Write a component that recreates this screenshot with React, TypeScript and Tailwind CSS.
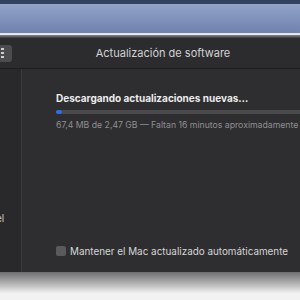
const font = { fontFamily: 'Inter, "Liberation Sans", sans-serif' };

export default function App() {
  return (
    <div className="w-[300px] h-[300px] overflow-hidden flex flex-col bg-[#f2f2f2]" style={font}>
      {/* desktop strip behind window */}
      <div className="h-[4px] bg-[#33425f]" />
      <div className="h-[29px] bg-gradient-to-b from-[#93a3c9] to-[#6f82ad]" />
      <div className="h-[2px] bg-[#e6e6e8]" />
      <div className="h-[3px] bg-gradient-to-b from-[#8a8a8c] to-[#3a3a3c]" />

      {/* window title bar */}
      <div className="h-[31px] bg-[#2c2c2e] border-b border-[#1c1c1e] flex items-center">
        <div className="w-[12px] h-[17px] bg-[#4c4c4e] rounded-r-[3px] flex flex-col justify-center gap-[2px] pl-[1px]">
          <span className="w-[3px] h-[2px] bg-[#cfcfcf]" />
          <span className="w-[3px] h-[2px] bg-[#cfcfcf]" />
          <span className="w-[3px] h-[2px] bg-[#cfcfcf]" />
        </div>
        <div className="flex-1 text-center text-[11px] text-[#d2d2d2] pl-[14px]">
          Actualización de software
        </div>
      </div>

      {/* window body */}
      <div className="h-[203px] flex bg-[#2e2e30]">
        <div className="w-[22px] border-r border-[#3c3c3e] bg-[#29292b] flex flex-col justify-end pb-[46px]">
          <span className="text-[10px] text-[#c8c8c8] -ml-[4px]">el</span>
        </div>
        <div className="flex-1 flex flex-col pl-[34px] pt-[23px] overflow-hidden">
          <div className="text-[10px] leading-[13px] font-bold text-[#ececec] whitespace-nowrap">
            Descargando actualizaciones nuevas…
          </div>
          <div className="mt-[5px] h-[4px] bg-[#4a4a4c] rounded-l-full w-[260px]">
            <div className="w-[6px] h-[4px] bg-[#2f6de6] rounded-full" />
          </div>
          <div className="mt-[5px] text-[8.7px] leading-[12px] text-[#8f8f91] whitespace-nowrap">
            67,4 MB de 2,47 GB — Faltan 16 minutos aproximadamente
          </div>
          <div className="mt-auto mb-[15px] flex items-center gap-[4px] whitespace-nowrap">
            <span className="w-[10px] h-[10px] rounded-[2px] bg-[#5a5a5c]" />
            <span className="text-[9.9px] leading-[12px] text-[#d6d6d6]">Mantener el Mac actualizado automáticamente</span>
          </div>
        </div>
      </div>

      {/* shadow under window */}
      <div className="h-[21px] bg-gradient-to-b from-[#6e6e70] to-[#f0f0f0]" />
    </div>
  );
}
